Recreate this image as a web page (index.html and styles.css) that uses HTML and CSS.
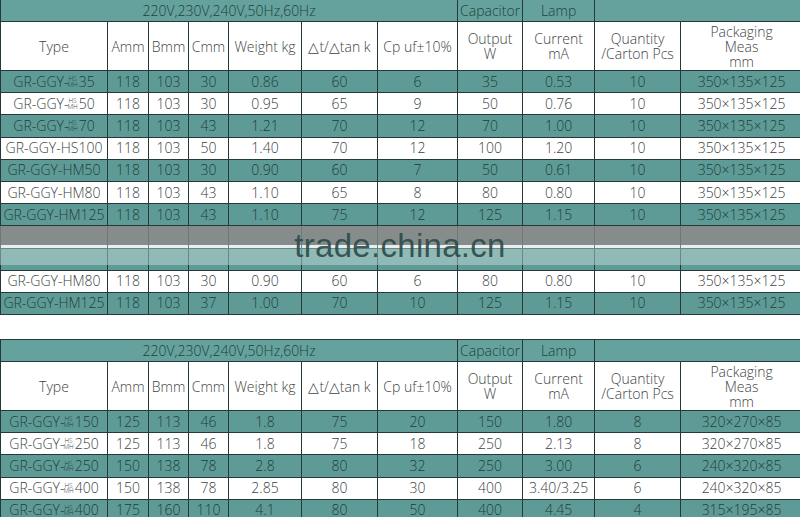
FILE: index.html
```html
<!DOCTYPE html>
<html>
<head>
<meta charset="utf-8">
<link rel="stylesheet" href="styles.css">
</head>
<body>
<div class="page">
  <div class="block">
    <table class="spec">
      <colgroup>
        <col class="c-type"><col class="c-a"><col class="c-b"><col class="c-c"><col class="c-w"><col class="c-dt"><col class="c-cp"><col class="c-out"><col class="c-cur"><col class="c-qty"><col class="c-pk">
      </colgroup>
      <tr class="h1">
        <td colspan="7">220V,230V,240V,50Hz,60Hz</td>
        <td>Capacitor</td>
        <td>Lamp</td>
        <td colspan="2"></td>
      </tr>
      <tr class="h2">
        <td>Type</td><td>Amm</td><td>Bmm</td><td>Cmm</td><td>Weight kg</td><td>△t/△tan k</td><td>Cp uf±10%</td>
        <td>Output<br>W</td><td>Current<br>mA</td><td>Quantity<br>/Carton Pcs</td><td>Packaging<br>Meas<br>mm</td>
      </tr>
      <tr class="t"><td>GR-GGY-<span class="stk"><span>HS</span><span>MH</span></span>35</td><td>118</td><td>103</td><td>30</td><td>0.86</td><td>60</td><td>6</td><td>35</td><td>0.53</td><td>10</td><td>350×135×125</td></tr>
      <tr class="w"><td>GR-GGY-<span class="stk"><span>HS</span><span>MH</span></span>50</td><td>118</td><td>103</td><td>30</td><td>0.95</td><td>65</td><td>9</td><td>50</td><td>0.76</td><td>10</td><td>350×135×125</td></tr>
      <tr class="t"><td>GR-GGY-<span class="stk"><span>HS</span><span>MH</span></span>70</td><td>118</td><td>103</td><td>43</td><td>1.21</td><td>70</td><td>12</td><td>70</td><td>1.00</td><td>10</td><td>350×135×125</td></tr>
      <tr class="w"><td>GR-GGY-HS100</td><td>118</td><td>103</td><td>50</td><td>1.40</td><td>70</td><td>12</td><td>100</td><td>1.20</td><td>10</td><td>350×135×125</td></tr>
      <tr class="t"><td>GR-GGY-HM50</td><td>118</td><td>103</td><td>30</td><td>0.90</td><td>60</td><td>7</td><td>50</td><td>0.61</td><td>10</td><td>350×135×125</td></tr>
      <tr class="w"><td>GR-GGY-HM80</td><td>118</td><td>103</td><td>43</td><td>1.10</td><td>65</td><td>8</td><td>80</td><td>0.80</td><td>10</td><td>350×135×125</td></tr>
      <tr class="t"><td>GR-GGY-HM125</td><td>118</td><td>103</td><td>43</td><td>1.10</td><td>75</td><td>12</td><td>125</td><td>1.15</td><td>10</td><td>350×135×125</td></tr>
      <tr class="w"><td></td><td></td><td></td><td></td><td></td><td></td><td></td><td></td><td></td><td></td><td></td></tr>
      <tr class="t"><td></td><td></td><td></td><td></td><td></td><td></td><td></td><td></td><td></td><td></td><td></td></tr>
      <tr class="w"><td>GR-GGY-HM80</td><td>118</td><td>103</td><td>30</td><td>0.90</td><td>60</td><td>6</td><td>80</td><td>0.80</td><td>10</td><td>350×135×125</td></tr>
      <tr class="t"><td>GR-GGY-HM125</td><td>118</td><td>103</td><td>37</td><td>1.00</td><td>70</td><td>10</td><td>125</td><td>1.15</td><td>10</td><td>350×135×125</td></tr>
    </table>
    <div class="watermark">
      <div class="wm-dark"></div>
      <div class="wm-light"></div>
      <span class="wm-text">trade.china.cn</span>
    </div>
  </div>

  <table class="spec second">
    <colgroup>
      <col class="c-type"><col class="c-a"><col class="c-b"><col class="c-c"><col class="c-w"><col class="c-dt"><col class="c-cp"><col class="c-out"><col class="c-cur"><col class="c-qty"><col class="c-pk">
    </colgroup>
    <tr class="h1">
      <td colspan="7">220V,230V,240V,50Hz,60Hz</td>
      <td>Capacitor</td>
      <td>Lamp</td>
      <td colspan="2"></td>
    </tr>
    <tr class="h2">
      <td>Type</td><td>Amm</td><td>Bmm</td><td>Cmm</td><td>Weight kg</td><td>△t/△tan k</td><td>Cp uf±10%</td>
      <td>Output<br>W</td><td>Current<br>mA</td><td>Quantity<br>/Carton Pcs</td><td>Packaging<br>Meas<br>mm</td>
    </tr>
    <tr class="t"><td>GR-GGY-<span class="stk"><span>HS</span><span>MH</span></span>150</td><td>125</td><td>113</td><td>46</td><td>1.8</td><td>75</td><td>20</td><td>150</td><td>1.80</td><td>8</td><td>320×270×85</td></tr>
    <tr class="w"><td>GR-GGY-<span class="stk"><span>HS</span><span>MH</span></span>250</td><td>125</td><td>113</td><td>46</td><td>1.8</td><td>75</td><td>18</td><td>250</td><td>2.13</td><td>8</td><td>320×270×85</td></tr>
    <tr class="t"><td>GR-GGY-<span class="stk"><span>HS</span><span>MH</span></span>250</td><td>150</td><td>138</td><td>78</td><td>2.8</td><td>80</td><td>32</td><td>250</td><td>3.00</td><td>6</td><td>240×320×85</td></tr>
    <tr class="w"><td>GR-GGY-<span class="stk"><span>HS</span><span>MH</span></span>400</td><td>150</td><td>138</td><td>78</td><td>2.85</td><td>80</td><td>30</td><td>400</td><td>3.40/3.25</td><td>6</td><td>240×320×85</td></tr>
    <tr class="t"><td>GR-GGY-<span class="stk"><span>HS</span><span>MH</span></span>400</td><td>175</td><td>160</td><td>110</td><td>4.1</td><td>80</td><td>50</td><td>400</td><td>4.45</td><td>4</td><td>315×195×85</td></tr>
  </table>
</div>
</body>
</html>
```

FILE: styles.css
```css
html, body {
  margin: 0;
  padding: 0;
  background: #ffffff;
}

body {
  font-family: "Open Sans", "Noto Sans", "DejaVu Sans", sans-serif;
  font-weight: 300;
  overflow: hidden;
}

.page {
  width: 800px;
  height: 517px;
  overflow: hidden;
}

.block {
  position: relative;
  width: 802px;
  margin-top: -1px;
}

.spec {
  border-collapse: collapse;
  table-layout: fixed;
  width: 802px;
  font-size: 14px;
}

.spec td {
  border: 1px solid #263837;
  padding: 0;
  text-align: center;
  vertical-align: middle;
  white-space: nowrap;
  overflow: hidden;
  height: 21.2px;
  line-height: 16px;
}

.c-type { width: 107px; }
.c-a { width: 41px; }
.c-b { width: 40px; }
.c-c { width: 40px; }
.c-w { width: 73px; }
.c-dt { width: 76px; }
.c-cp { width: 80px; }
.c-out { width: 65px; }
.c-cur { width: 72px; }
.c-qty { width: 86px; }
.c-pk { width: 122px; }

.h1 td {
  background: #65a29d;
  color: #1f3f3c;
  height: 21px;
}

.h2 td {
  background: #ffffff;
  color: #3d4444;
  height: 48px;
  line-height: 15px;
}

.t td {
  background: #5e9b96;
  color: #1f3d3b;
}

.w td {
  background: #ffffff;
  color: #3a3f3f;
}

.stk {
  display: inline-block;
  vertical-align: baseline;
  font-size: 6.5px;
  line-height: 5.5px;
  margin: 0 1px 0 -1px;
}

.stk span {
  display: block;
}

.watermark {
  position: absolute;
  left: 0;
  top: 227px;
  width: 802px;
  height: 39px;
  display: flex;
  flex-direction: column;
}

.wm-dark {
  height: 19px;
  background: rgba(120, 128, 126, 0.9);
}

.wm-light {
  height: 20px;
  background: rgba(200, 222, 219, 0.47);
}

.wm-text {
  position: absolute;
  left: 0;
  width: 800px;
  top: 0;
  text-align: center;
  font-family: "Liberation Sans", Arial, sans-serif;
  font-weight: 400;
  font-size: 33px;
  line-height: 39px;
  color: rgba(45, 75, 74, 0.92);
  letter-spacing: 0.3px;
}

.second {
  margin-top: 24px;
}
```
